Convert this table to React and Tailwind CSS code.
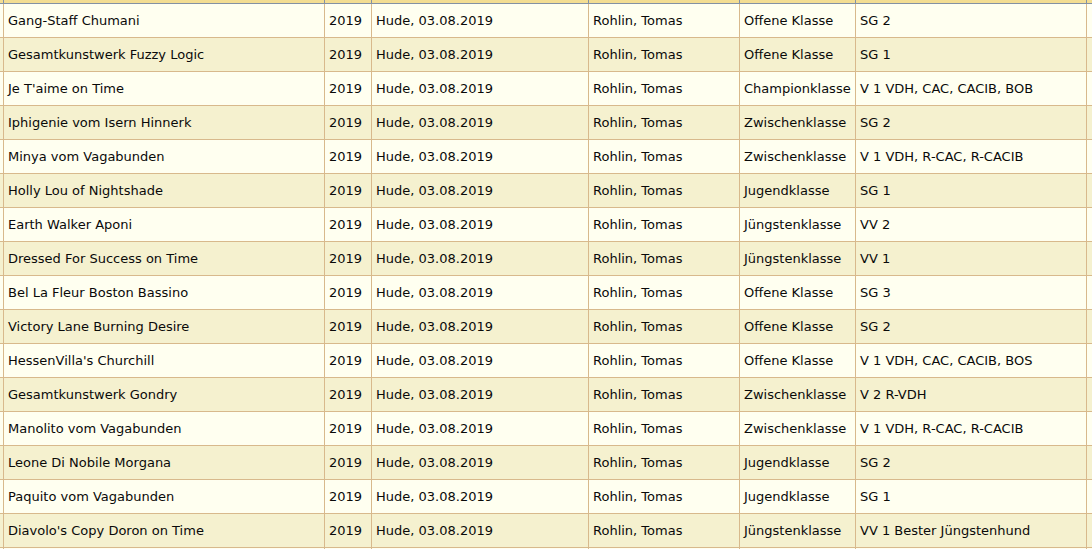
import React from 'react';

const rows = [
  ['Gang-Staff Chumani', 'Offene Klasse', 'SG 2'],
  ['Gesamtkunstwerk Fuzzy Logic', 'Offene Klasse', 'SG 1'],
  ["Je T'aime on Time", 'Championklasse', 'V 1 VDH, CAC, CACIB, BOB'],
  ['Iphigenie vom Isern Hinnerk', 'Zwischenklasse', 'SG 2'],
  ['Minya vom Vagabunden', 'Zwischenklasse', 'V 1 VDH, R-CAC, R-CACIB'],
  ['Holly Lou of Nightshade', 'Jugendklasse', 'SG 1'],
  ['Earth Walker Aponi', 'Jüngstenklasse', 'VV 2'],
  ['Dressed For Success on Time', 'Jüngstenklasse', 'VV 1'],
  ['Bel La Fleur Boston Bassino', 'Offene Klasse', 'SG 3'],
  ['Victory Lane Burning Desire', 'Offene Klasse', 'SG 2'],
  ["HessenVilla's Churchill", 'Offene Klasse', 'V 1 VDH, CAC, CACIB, BOS'],
  ['Gesamtkunstwerk Gondry', 'Zwischenklasse', 'V 2 R-VDH'],
  ['Manolito vom Vagabunden', 'Zwischenklasse', 'V 1 VDH, R-CAC, R-CACIB'],
  ['Leone Di Nobile Morgana', 'Jugendklasse', 'SG 2'],
  ['Paquito vom Vagabunden', 'Jugendklasse', 'SG 1'],
  ["Diavolo's Copy Doron on Time", 'Jüngstenklasse', 'VV 1 Bester Jüngstenhund'],
  ['', '', ''],
];

const cols = 'grid grid-cols-[3px_321px_47px_217px_151px_116px_231px_1fr]';

function Cell({ children }) {
  return (
    <div className="border-l border-[#d8b98c] pl-[4px] flex items-center whitespace-nowrap overflow-hidden">
      {children}
    </div>
  );
}

export default function App() {
  return (
    <div
      className="h-[549px] w-full overflow-hidden bg-white text-[13px] text-[#0a0a0a]"
      style={{ fontFamily: '"DejaVu Sans", Verdana, sans-serif' }}
    >
      <div className={`${cols} h-[4px] bg-[#f3dd92] border-b border-[#8391a3]`}>
        <div />
        {[0, 1, 2, 3, 4, 5, 6].map((i) => (
          <div key={i} className="border-l border-[#8391a3]" />
        ))}
      </div>
      {rows.map(([name, klasse, result], i) => (
        <div
          key={i}
          className={`${cols} h-[34px] border-b border-[#d8b98c] ${
            i % 2 === 0 ? 'bg-[#fffff0]' : 'bg-[#f5f1cf]'
          }`}
        >
          <div />
          <Cell>{name}</Cell>
          <Cell>{name ? '2019' : ''}</Cell>
          <Cell>{name ? 'Hude, 03.08.2019' : ''}</Cell>
          <Cell>{name ? 'Rohlin, Tomas' : ''}</Cell>
          <Cell>{klasse}</Cell>
          <Cell>{result}</Cell>
          <Cell />
        </div>
      ))}
    </div>
  );
}
